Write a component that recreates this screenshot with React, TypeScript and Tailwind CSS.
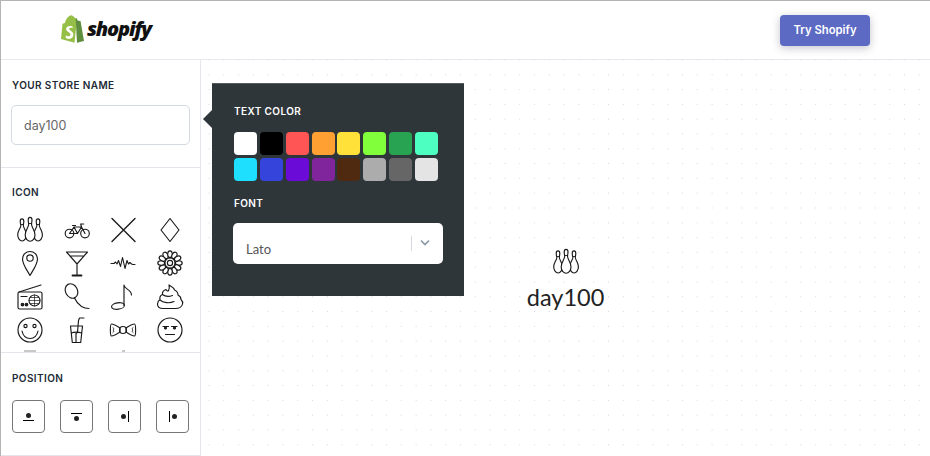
import React from "react";

const S = ({ children, w = 32, h = 32, sw = 1.15, className = "" }: { children: React.ReactNode; w?: number; h?: number; sw?: number; className?: string }) => (
  <svg width={w} height={h} viewBox="0 0 32 32" fill="none" stroke="#1a1a1a" strokeWidth={sw} strokeLinecap="round" strokeLinejoin="round" className={className}>
    {children}
  </svg>
);

const sidePin = "M9.600 7.500c0-3.500 3.600-3.500 3.600 0 0 2-.7 3-.4 4.500.6 2.700 3 4.600 3 8.800 0 3.300-2 6.200-4.300 6.200s-4.400-2.900-4.400-6.200c0-4.200 2.600-6.100 3.100-8.800.3-1.500-.6-2.500-.6-4.500z";

const Bowling = () => (
  <>
    <path d={sidePin} transform="translate(-3.400 0)" />
    <path d={sidePin} transform="translate(12.600 0)" />
    <path d="M14.200 6c0-3.600 3.800-3.600 3.800 0 0 2-.7 3.500-.4 5 .6 3 3.400 5.500 3.400 10 0 3.300-2.300 6.200-4.900 6.200s-4.900-2.900-4.900-6.200c0-4.500 2.800-7 3.400-10 .3-1.500-.4-3-.4-5z" fill="#fff" />
    <path d="M14.700 9.500h2.800M6.800 10.500h2.600M22.800 10.500h2.600" strokeWidth=".9" />
  </>
);

const icons: React.ReactNode[] = [
  <Bowling />,
  <>
    <circle cx="8.500" cy="19.500" r="4.300" />
    <circle cx="24" cy="19.500" r="4.300" />
    <path d="M8.500 19.500l4.500-6.500h7.500L24 19.500M13 13l3.500 6.500 4-6.500M11.500 11.500h3M20.500 13l-.8-3h3M16.500 19.500h-8" />
  </>,
  <path d="M5 4.500l23 23M28 4.500l-23 23" strokeWidth="1.400" />,
  <path d="M16 4.500L25 16l-9 11.500L7 16z" />,
  <>
    <path d="M16 28.500c-3-5.500-7.500-11-7.500-16.500a7.500 7.500 0 0 1 15 0c0 5.500-4.500 11-7.500 16.500z" />
    <circle cx="16" cy="11" r="3.200" />
  </>,
  <>
    <path d="M5.500 5h21L16 17zM8.800 9h14.400M16 17v11.500" />
    <path d="M11.500 28.500h9" strokeWidth="1.800" />
  </>,
  <path d="M4 16.500h3l1.500-1.500 1.500 2 1.500-3.500 2 6 2-9 2.500 11 2-8 1.500 3.500 1.500-1.500 1.500 1.500 1.500.5H28" strokeWidth="1.100" />,
  <>
    <circle cx="16" cy="16" r="2.600" />
    <circle cx="16" cy="16" r="5" />
    {Array.from({ length: 12 }).map((_, i) => {
      const a = (i * Math.PI) / 6;
      const cx = 16 + 8.800 * Math.cos(a);
      const cy = 16 + 8.800 * Math.sin(a);
      return <ellipse key={i} cx={cx} cy={cy} rx="2.300" ry="3.400" transform={`rotate(${i * 30 + 90} ${cx} ${cy})`} fill="#fff" />;
    })}
  </>,
  <>
    <rect x="4" y="11" width="24" height="17" rx="1.500" />
    <path d="M5 11l22-7" />
    <circle cx="20.500" cy="19.500" r="5.500" />
    <path d="M15 19.500h11M20.500 14v11M16.500 16.500h8M16.500 22.500h8" strokeWidth=".7" />
    <circle cx="8.500" cy="23.500" r="1.300" fill="#1a1a1a" />
    <circle cx="12.500" cy="23.500" r="1.300" fill="#1a1a1a" />
    <path d="M7 15.500h6" />
  </>,
  <>
    <ellipse cx="10.500" cy="10" rx="6" ry="7.500" transform="rotate(-28 10.500 10)" />
    <path d="M13.500 17c1.500 3.500 4 6.500 7 8.500 2.500 1.500 5 2 7.500 2" />
  </>,
  <>
    <ellipse cx="11" cy="25" rx="6.500" ry="3.200" transform="rotate(-8 11 25)" />
    <path d="M17 24.500V4c0 4 7.500 4.500 7.500 10" />
  </>,
  <path d="M15 4c1 1 5 2 5.500 5 2.500 1 3.500 2.500 3.500 5 2 1 3 2.500 3 4.500 1.500 1.500 2 3 1.500 4.500-.5 2.500-3.500 4.500-7 4.500H9c-3.500 0-5.500-2-5.500-4.500 0-2 1-3.500 2.500-4.500-.5-2 .5-4 2.500-5-.5-2.500 1-4 3.500-5C14 12 16 9 15 4zM6 19c3 3 10 3.500 14 1.500M8.500 13.500c2.500 2 6 2.500 10 1" />,
  <>
    <circle cx="16" cy="16" r="12" />
    <circle cx="11.500" cy="12" r="1.600" />
    <circle cx="20.500" cy="12" r="1.600" />
    <path d="M8 17c1 5 4.500 7.500 8 7.500s7-2.500 8-7.500" />
  </>,
  <>
    <path d="M9.500 12h12l-1.800 16.500h-8.400zM10.300 19c3-1 7-1 10.500 0" />
    <path d="M15 28V19.500l1.500-1 1-12 1-2.500H23" />
  </>,
  <>
    <path d="M13 14c-3-2-6-4-8.500-4C3 10 3 22 4.500 22c2.500 0 5.500-2 8.500-4zM19 14c3-2 6-4 8.500-4 1.500 0 1.500 12 0 12-2.500 0-5.500-2-8.500-4z" />
    <circle cx="16" cy="16" r="3.500" />
    <path d="M6 13.500c1 .5 1 1.500 0 2.500 1 1 1 2 0 2.500M26 13.500c-1 .5-1 1.500 0 2.500-1 1-1 2 0 2.500" strokeWidth=".9" />
  </>,
  <>
    <circle cx="16" cy="16" r="12" />
    <path d="M9 12.500h5.500M17.500 12.500H23M11.500 20.500h9" />
    <circle cx="11.500" cy="14" r="1" fill="#1a1a1a" />
    <circle cx="20.500" cy="14" r="1" fill="#1a1a1a" />
  </>,
];

const colors = [
  "bg-[#ffffff]", "bg-[#000000]", "bg-[#ff5555]", "bg-[#ffa033]", "bg-[#ffe13a]", "bg-[#80ff3a]", "bg-[#28a351]", "bg-[#4dffc0]",
  "bg-[#1fdfff]", "bg-[#3545dc]", "bg-[#6a0bd8]", "bg-[#80259b]", "bg-[#4f2a10]", "bg-[#acacac]", "bg-[#666666]", "bg-[#e4e4e4]",
];

const Label = ({ children, className = "" }: { children: React.ReactNode; className?: string }) => (
  <div className={`font-['Inter',sans-serif] text-[10px] font-semibold leading-3 tracking-[0.04em] ${className}`}>{children}</div>
);

const PosBtn = ({ children }: { children: React.ReactNode }) => (
  <div className="flex h-[33px] w-[33px] items-center justify-center rounded-[4px] border border-[#777777] bg-white">{children}</div>
);

const Dot = () => <div className="h-[5px] w-[5px] rounded-full bg-[#222222]" />;
const HLine = () => <div className="h-[1px] w-[11px] bg-[#000000]" />;
const VLine = () => <div className="h-[11px] w-[1px] bg-[#000000]" />;

export default function App() {
  return (
    <div className="flex h-[456px] w-[930px] flex-col overflow-hidden border-t border-l border-[#b4b4b4] bg-white font-['Inter',sans-serif]">
      <header className="flex h-[59px] shrink-0 items-center justify-between border-b border-[#e8e9ee] pl-[60px] pr-[60px]">
        <div className="flex items-center gap-[3px] pb-[2px]">
          <svg width="23" height="28" viewBox="0 0 23 28">
            <path d="M15.500 3.500 13 2.200C12 .8 10.500 0 9.500.4 7 1 4.500 4.500 4 8L1.500 8.800 0 24l13.500 3.800L16 3.500z" fill="#95bf47" />
            <path d="M15.500 3.500l-.800.300L16 27.800 23 26 19.500 6l-2.500-.300z" fill="#5e8e3e" />
            <path d="M11.500 11.500s-1-.5-2.300-.5c-3.800 0-4 2.500-4 3 0 2.800 4.300 3.500 4.300 5.500 0 1-1 1.800-1.800 1.800-1.500 0-2.600-1.100-2.600-1.100l-.6 2.200s1.300 1.600 3.600 1.600c2.500 0 4.300-1.800 4.300-4.400 0-3.300-4.200-3.900-4.200-5.500 0-.5.300-1.400 1.800-1.400 1 0 1.800.4 1.800.4z" fill="#fff" />
          </svg>
          <span className="font-['Open_Sans',sans-serif] text-[20px] font-extrabold italic leading-none tracking-[-0.06em] text-[#111111]">shopify</span>
        </div>
        <button className="mt-[1px] h-[31px] w-[90px] rounded-[4px] bg-[#5c6ac4] text-[11.300px] font-semibold text-white shadow-[0_2px_8px_rgba(60,60,90,0.3)]">Try Shopify</button>
      </header>

      <div className="flex min-h-0 flex-1">
        <aside className="flex w-[200px] shrink-0 flex-col border-r border-[#e4e6ec] text-[#212b36]">
          <section className="h-[108px] shrink-0 border-b border-[#e4e6ec] pl-[10px] pr-[10px] pt-[19px]">
            <Label className="ml-[1px]">YOUR STORE NAME</Label>
            <div className="mt-[14px] flex h-[40px] items-center rounded-[5px] border border-[#d5d9e3] pl-[12px] pt-[2px] text-[12.500px] text-[#666666]">day100</div>
          </section>
          <section className="flex h-[185px] shrink-0 flex-col overflow-hidden border-b border-[#e4e6ec] pt-[18px]">
            <Label className="ml-[11px]">ICON</Label>
            <div className="ml-[13px] mt-[16px] grid w-[172px] grid-cols-[32px_32px_32px_32px] justify-between gap-y-[1.300px]">
              {icons.map((ic, i) => (
                <div key={i} className="flex h-[32px] items-center justify-center"><S>{ic}</S></div>
              ))}
              <div className="flex h-[32px] justify-center"><div className="mt-[3px] h-[3px] w-[12px] bg-[#c8c8c8]" /></div>
              <div />
              <div className="flex h-[32px] justify-center"><div className="mt-[3px] h-[3px] w-[3px] bg-[#c8c8c8]" /></div>
              <div />
            </div>
          </section>
          <section className="h-[103px] shrink-0 border-b border-[#e4e6ec] pl-[11px] pr-[11px] pt-[19px]">
            <Label>POSITION</Label>
            <div className="mt-[16px] flex justify-between">
              <PosBtn>
                <div className="flex flex-col items-center gap-[2px]"><Dot /><HLine /></div>
              </PosBtn>
              <PosBtn>
                <div className="flex flex-col items-center gap-[2px]"><HLine /><Dot /></div>
              </PosBtn>
              <PosBtn>
                <div className="flex items-center gap-[2px]"><Dot /><VLine /></div>
              </PosBtn>
              <PosBtn>
                <div className="flex items-center gap-[2px]"><VLine /><Dot /></div>
              </PosBtn>
            </div>
          </section>
        </aside>

        <main className="relative min-w-0 flex-1 bg-[radial-gradient(circle,#d3d6db_0.7px,transparent_0.9px)] bg-[length:14.800px_14.800px] bg-[position:0.600px_-7.400px]">
          <div className="absolute left-[11px] top-[23px] h-[213px] w-[252px] border-t border-[#555c60] bg-[#2f363a] pl-[22px] pt-[21px] text-white">
            <div className="absolute -left-[9px] top-[26px] h-0 w-0 border-y-[9px] border-r-[9px] border-y-transparent border-r-[#2f363a]" />
            <Label>TEXT COLOR</Label>
            <div className="mt-[15px] grid grid-cols-[repeat(8,23px)] gap-x-[2.860px] gap-y-[3px]">
              {colors.map((c) => (
                <div key={c} className={`h-[23px] w-[23px] rounded-[4px] ${c}`} />
              ))}
            </div>
            <Label className="mt-[16px]">FONT</Label>
            <div className="relative -ml-[1px] mt-[14px] flex h-[41px] w-[210px] items-end rounded-[5px] bg-white pb-[7px] pl-[13px] font-['Lato',sans-serif] text-[13px] leading-4 text-[#555555]">
              Lato
              <div className="absolute left-[178px] top-[13px] h-[15px] w-[1px] bg-[#d5d8de]" />
              <svg className="absolute left-[186px] top-[16px]" width="12" height="8" viewBox="0 0 12 8" fill="none" stroke="#8e99a8" strokeWidth="1.700"><path d="M2 1.500l4 4 4-4" /></svg>
            </div>
          </div>
          <div className="flex flex-col items-center pt-[186px] font-['Lato',sans-serif] text-[#222222]">
            <S><Bowling /></S>
            <div className="mt-[4px] text-[23.500px] leading-[30px]">day100</div>
          </div>
        </main>
      </div>
    </div>
  );
}
